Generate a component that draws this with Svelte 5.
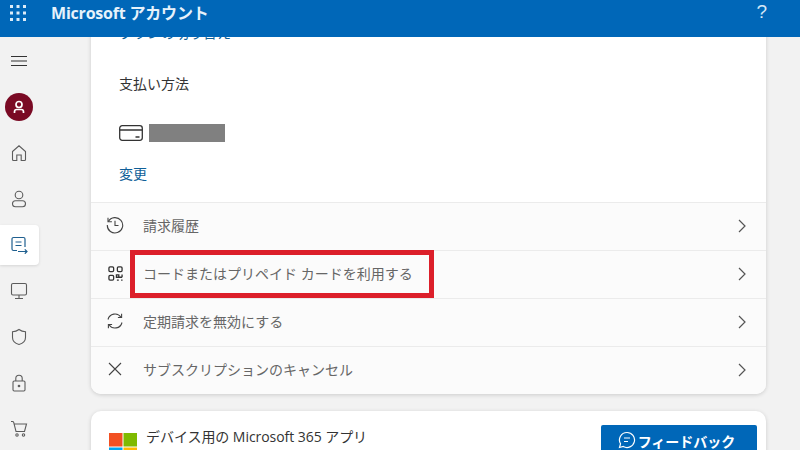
<script>
    const rows = [
        { id: "history", label: "請求履歴" },
        { id: "qr", label: "コードまたはプリペイド カードを利用する", marked: true },
        { id: "renew", label: "定期請求を無効にする" },
        { id: "cancel", label: "サブスクリプションのキャンセル" }
    ];
</script>

<div class="page">
    <header>
        <svg class="waffle" width="16" height="16" viewBox="0 0 16 16" fill="#dcecf8">
            {#each [1.5, 8, 14.5] as y}
                {#each [1.5, 8, 14.5] as x}
                    <rect x={x - 1.5} y={y - 1.5} width="3" height="3" />
                {/each}
            {/each}
        </svg>
        <div class="brand">Microsoft アカウント</div>
        <div class="help">?</div>
    </header>

    <div class="body">
        <nav>
            <div class="nav-item">
                <svg width="18" height="18" viewBox="0 0 18 18" stroke="#333" fill="none"><path d="M1 4.500h16M1 9h16M1 13.500h16" /></svg>
            </div>
            <div class="nav-item">
                <div class="avatar">
                    <svg width="14" height="14" viewBox="0 0 14 14" stroke="#fff" stroke-width="1.700" fill="none"><circle cx="7" cy="4.500" r="3" /><path d="M2.500 13v-1.200c0-1.500 1-2.300 2.300-2.300h4.400c1.300 0 2.300.8 2.300 2.300V13" /></svg>
                </div>
            </div>
            <div class="nav-item">
                <svg width="18" height="18" viewBox="0 0 18 18" stroke="#5c5c5c" stroke-width="1.100" fill="none"><path d="M2.500 7.500 9 1.800l6.500 5.700v8a1 1 0 0 1-1 1h-3.300v-5.500H6.800v5.500H3.500a1 1 0 0 1-1-1z" /></svg>
            </div>
            <div class="nav-item">
                <svg width="18" height="18" viewBox="0 0 18 18" stroke="#5c5c5c" stroke-width="1.100" fill="none"><circle cx="9" cy="5" r="3.800" /><rect x="2.500" y="10.800" width="13" height="6" rx="3" /></svg>
            </div>
            <div class="nav-item active">
                <svg width="18" height="18" viewBox="0 0 18 18" stroke="#1f5f8f" stroke-width="1.200" fill="none"><path d="M15 11V3a1.500 1.500 0 0 0-1.500-1.500h-10A1.500 1.500 0 0 0 2 3v10a1.500 1.500 0 0 0 1.500 1.500H7" /><path d="M5.500 6h6M5.500 9.500h6M8 15.500h9M14.800 13.300l2.200 2.200-2.200 2.200" /></svg>
            </div>
            <div class="nav-item">
                <svg width="18" height="18" viewBox="0 0 18 18" stroke="#5c5c5c" stroke-width="1.100" fill="none"><rect x="1.500" y="1.500" width="15" height="11.500" rx="1.500" /><path d="M9 13v3.500M5 16.500h8" /></svg>
            </div>
            <div class="nav-item">
                <svg width="18" height="18" viewBox="0 0 18 18" stroke="#5c5c5c" stroke-width="1.100" fill="none"><path d="M9 1.500c2 1.500 4.200 2.200 6.500 2.300v5.700c0 3.300-2.300 5.800-6.500 7-4.200-1.200-6.500-3.700-6.500-7V3.800C4.800 3.700 7 3 9 1.500z" /></svg>
            </div>
            <div class="nav-item">
                <svg width="18" height="18" viewBox="0 0 18 18" stroke="#5c5c5c" stroke-width="1.100" fill="none"><rect x="3" y="7" width="12" height="10" rx="1.200" /><path d="M5.800 7V4.500a3.200 3.200 0 0 1 6.400 0V7" /><circle cx="9" cy="12" r=".8" fill="#5c5c5c" /></svg>
            </div>
            <div class="nav-item">
                <svg width="18" height="18" viewBox="0 0 18 18" stroke="#5c5c5c" stroke-width="1.100" fill="none"><path d="M1 1.500h1.500c.6 0 1 .3 1.200.9L6 11.500h8.500l2-7.500H4.200" /><circle cx="7" cy="15" r="1.200" /><circle cx="13.500" cy="15" r="1.200" /></svg>
            </div>
        </nav>

        <main>
            <section class="card plan">
                <div class="pay">
                    <a class="link" href="#top">プランの切り替え</a>
                    <div class="pay-title">支払い方法</div>
                    <div class="pay-card">
                        <svg width="24" height="16" viewBox="0 0 24 16" stroke="#333" stroke-width="1.300" fill="none"><rect x=".7" y=".7" width="22.600" height="14.600" rx="2.500" /><path d="M.7 5h22.600" stroke-width="1.600" /><path d="M16.500 12h4" /></svg>
                        <div class="masked"></div>
                    </div>
                    <a class="link" href="#top">変更</a>
                </div>
                {#each rows as row}
                    <div class="row">
                        <div class="row-icon">
                            {#if row.id === "history"}
                                <svg width="18" height="18" viewBox="0 0 18 18" stroke="#444" stroke-width="1.100" fill="none"><path d="M2.300 5.500A7.700 7.700 0 1 1 1.300 9" /><path d="M2 1.800v3.900h3.900M9 4.800V9.500h3.500" /></svg>
                            {:else if row.id === "qr"}
                                <svg width="15" height="15" viewBox="0 0 16 16" stroke="#333" stroke-width="1.400" fill="none"><rect x="1" y="1" width="5" height="5" rx="1.200" /><rect x="10" y="1" width="5" height="5" rx="1.200" /><rect x="1" y="10" width="5" height="5" rx="1.200" /><path d="M9 9.500h2.500v2.500H9zM11.500 12H15M15 9v3M9.500 15h2M14 15h1.500" /></svg>
                            {:else if row.id === "renew"}
                                <svg width="18" height="18" viewBox="0 0 18 18" stroke="#444" stroke-width="1.100" fill="none"><path d="M2 7.500A7.200 7.200 0 0 1 15 5.200M16 10.500A7.200 7.200 0 0 1 3 12.800" /><path d="M15.600 1.800v3.700h-3.700M2.400 16.200v-3.700h3.700" /></svg>
                            {:else}
                                <svg width="14" height="14" viewBox="0 0 14 14" stroke="#444" stroke-width="1.100" fill="none"><path d="M1 1l12 12M13 1 1 13" /></svg>
                            {/if}
                        </div>
                        <span class="row-label">{row.label}</span>
                        <svg class="chev" width="10" height="14" viewBox="0 0 10 14" stroke="#555" stroke-width="1.200" fill="none"><path d="M2 1l6 6-6 6" /></svg>
                        {#if row.marked}<div class="marker"></div>{/if}
                    </div>
                {/each}
            </section>

            <section class="card apps">
                <svg class="ms-logo" width="28" height="28" viewBox="0 0 28 28">
                    <rect width="13.500" height="13.500" fill="#f25022" />
                    <rect x="14.500" width="13.500" height="13.500" fill="#7fba00" />
                    <rect y="14.500" width="13.500" height="13.500" fill="#00a4ef" />
                    <rect x="14.500" y="14.500" width="13.500" height="13.500" fill="#ffb900" />
                </svg>
                <span class="apps-title">デバイス用の Microsoft 365 アプリ</span>
                <button class="feedback">
                    <svg width="18" height="18" viewBox="0 0 18 18" stroke="#fff" stroke-width="1.200" fill="none"><path d="M9 1.500a7.500 7.500 0 1 1-3.700 14L1.500 16.500l1-3.700A7.500 7.500 0 0 1 9 1.500z" /><path d="M6 7h6M6 10.500h4" /></svg>
                    フィードバック
                </button>
            </section>
        </main>
    </div>
</div>

<style>
    :global(body) {
        overflow: hidden;
    }

    .page {
        width: 800px;
        height: 450px;
        overflow: hidden;
        background-color: #f2f2f2;
        font-family: "Open Sans", "Noto Sans CJK JP", sans-serif;
        font-size: 14px;
        color: #333;
    }

    header {
        position: relative;
        z-index: 2;
        height: 37px;
        display: flex;
        align-items: center;
        background-color: #0067b8;
        color: #fff;
    }

    .waffle {
        margin-left: 10px;
        margin-top: -12px;
    }

    .brand {
        margin-left: 25px;
        margin-top: -14px;
        font-size: 16px;
        font-weight: 700;
        letter-spacing: -0.2px;
        color: #e6f2fb;
    }

    .help {
        margin-left: auto;
        margin-right: 33px;
        margin-top: -14px;
        font-size: 19px;
        font-family: "Liberation Sans", sans-serif;
        color: #d5e8f7;
    }

    .body {
        display: flex;
    }

    nav {
        width: 91px;
        flex-shrink: 0;
        padding-top: 1px;
        display: flex;
        flex-direction: column;
    }

    .nav-item {
        width: 38px;
        padding-right: 1px;
        height: 40px;
        margin-top: 6px;
        display: flex;
        align-items: center;
        justify-content: center;
        border-radius: 0 4px 4px 0;
    }

    .nav-item:first-child {
        margin-top: 3px;
    }

    .active {
        background-color: #fff;
        box-shadow: 0 1px 3px rgba(0, 0, 0, 0.12);
    }

    .avatar {
        width: 28px;
        height: 28px;
        border-radius: 50%;
        background-color: #7a0a24;
        display: flex;
        align-items: center;
        justify-content: center;
    }

    main {
        width: 675px;
        flex-shrink: 0;
    }

    .card {
        background-color: #fff;
        border-radius: 10px;
        box-shadow: 0 1px 4px rgba(0, 0, 0, 0.16);
    }

    .plan {
        margin-top: -14px;
        overflow: hidden;
    }

    .pay {
        height: 179px;
        padding-left: 28px;
        display: flex;
        flex-direction: column;
        align-items: flex-start;
    }

    .link {
        color: #0f5f98;
        text-decoration: none;
        line-height: 20px;
    }

    .pay-title {
        margin-top: 31px;
        line-height: 20px;
    }

    .pay-card {
        margin-top: 30px;
        display: flex;
        align-items: center;
        gap: 6px;
    }

    .masked {
        width: 76px;
        height: 18px;
        background-color: #808080;
    }

    .pay-card + .link {
        margin-top: 22px;
    }

    .row {
        position: relative;
        height: 47px;
        display: flex;
        align-items: center;
        border-top: 1px solid #ebebeb;
        background-color: #fbfbfb;
        color: #666;
    }

    .row-icon {
        width: 48px;
        margin-right: 4px;
        margin-bottom: 3px;
        display: flex;
        justify-content: center;
    }

    .row-label {
        flex: 1;
        margin-bottom: 3px;
    }

    .chev {
        margin-right: 19px;
        margin-bottom: 2px;
    }

    .marker {
        position: absolute;
        left: 39px;
        top: -1px;
        width: 304px;
        height: 48px;
        box-sizing: border-box;
        border: 5px solid #dc1f2a;
    }

    .apps {
        margin-top: 17px;
        height: 60px;
        display: flex;
        align-items: flex-start;
        border-radius: 10px 10px 0 0;
    }

    .ms-logo {
        margin: 22px 0 0 18px;
    }

    .apps-title {
        margin: 16px 0 0 9px;
        line-height: 20px;
        letter-spacing: -0.05px;
    }

    .feedback {
        margin: 14px 9px 0 auto;
        width: 156px;
        height: 40px;
        border: none;
        border-radius: 2px;
        background-color: #0067b8;
        color: #fff;
        font-family: inherit;
        font-size: 14px;
        font-weight: 600;
        display: flex;
        align-items: flex-start;
        justify-content: center;
        gap: 2px;
        padding: 6px 5px 0 0;
    }
</style>
